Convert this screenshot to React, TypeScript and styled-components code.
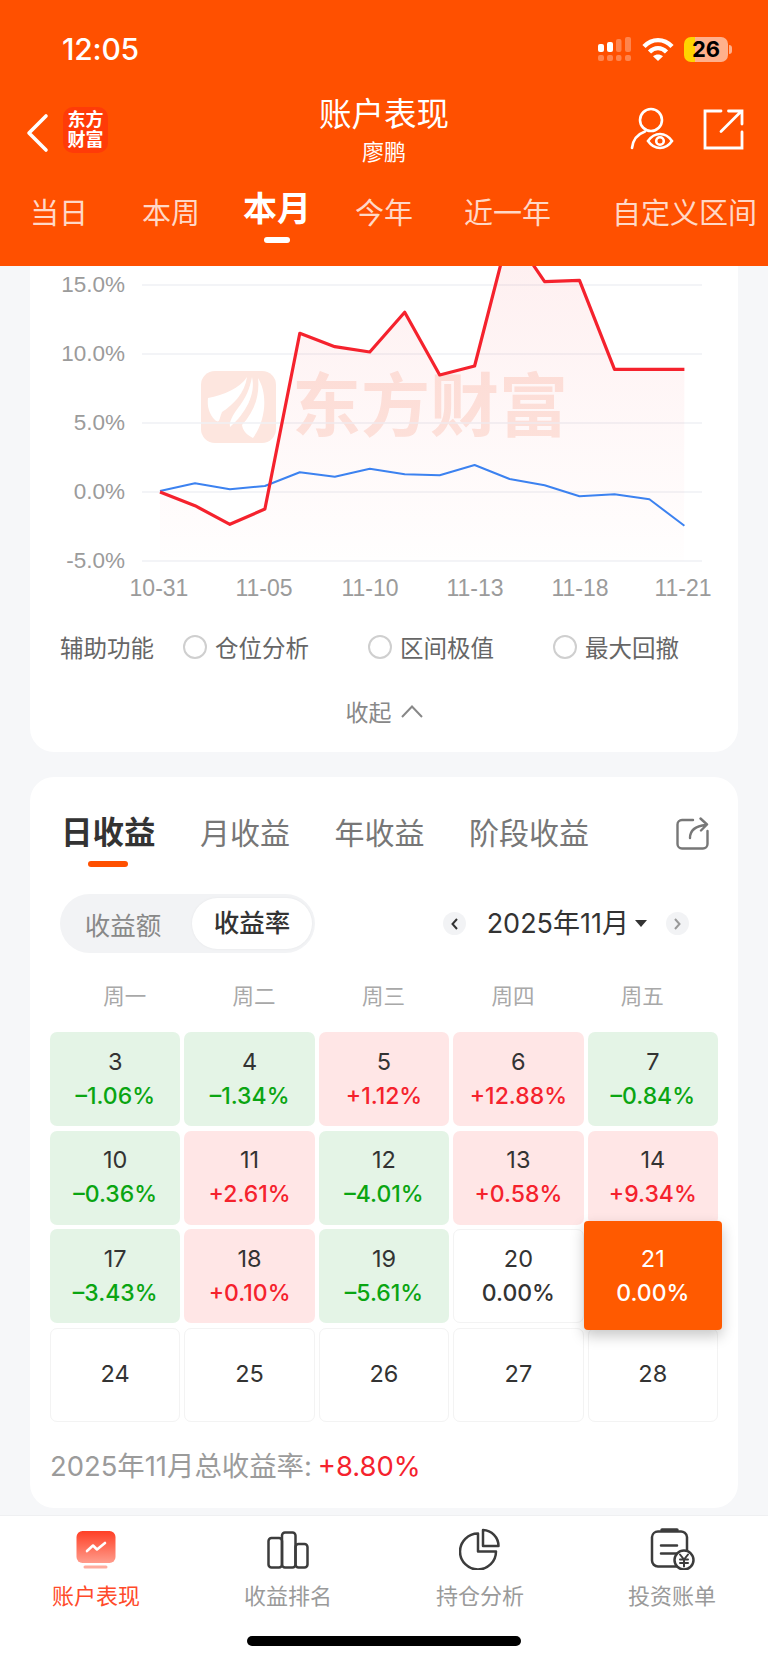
import React from "react";
import styled, { createGlobalStyle } from "styled-components";

const ORANGE = "#ff5000";
const RED = "#f5222d";
const GREEN = "#0aa512";

const Global = createGlobalStyle`
  html, body { margin: 0; padding: 0; background: #f6f7f9; }
  * { box-sizing: border-box; }
  body { font-family: Inter, "Noto Sans CJK SC", sans-serif; }
`;

const Page = styled.div`
  width: 768px;
  height: 1663px;
  display: flex;
  flex-direction: column;
  overflow: hidden;
  background: #f6f7f9;
`;

/* ---------- header ---------- */
const Header = styled.header`
  height: 266px;
  flex: none;
  background: ${ORANGE};
  color: #fff;
  display: flex;
  flex-direction: column;
`;
const StatusBar = styled.div`
  height: 98px;
  padding: 0 36px 0 62px;
  display: flex;
  align-items: center;
  justify-content: space-between;
`;
const Time = styled.div`
  font-size: 30px;
  font-weight: 500;
  letter-spacing: -0.2px;
  line-height: 1;
`;
const StatusIcons = styled.div`
  display: flex;
  align-items: center;
  gap: 10px;
`;
const Battery = styled.div`
  width: 44px;
  height: 25px;
  border-radius: 7px;
  background: linear-gradient(90deg, #ffd400 0 11px, rgba(255, 255, 255, 0.55) 11px);
  color: #000;
  font-size: 22px;
  font-weight: 700;
  line-height: 25px;
  text-align: center;
`;
const BatteryWrap = styled.div`
  display: flex;
  align-items: center;
  gap: 1px;
`;
const BatteryNub = styled.div`
  width: 3px;
  height: 9px;
  border-radius: 0 3px 3px 0;
  background: rgba(255, 255, 255, 0.55);
`;
const NavRow = styled.div`
  height: 91px;
  position: relative;
  display: flex;
  align-items: flex-start;
  padding: 9px 24px 0 26px;
`;
const LogoBadge = styled.div`
  width: 45px;
  height: 46px;
  margin: 0 0 0 13px;
  border-radius: 10px;
  background: #ff3b08;
  font-size: 18px;
  line-height: 20px;
  font-weight: 700;
  text-align: center;
  padding-top: 3px;
`;
const TitleBlock = styled.div`
  position: absolute;
  left: 0;
  right: 0;
  top: -3px;
  text-align: center;
  pointer-events: none;
`;
const Title = styled.div`
  font-size: 32.5px;
  line-height: 40px;
  font-weight: 400;
`;
const SubTitle = styled.div`
  font-size: 22px;
  line-height: 30px;
  margin-top: 2px;
`;
const NavRight = styled.div`
  margin-left: auto;
  display: flex;
  align-items: flex-start;
  gap: 28px;
`;
const Periods = styled.div`
  display: flex;
  align-items: flex-start;
  padding-left: 30px;
  white-space: nowrap;
`;
const Period = styled.div<{ $gap: number; $active?: boolean }>`
  margin-left: ${(p) => p.$gap}px;
  display: flex;
  flex-direction: column;
  align-items: center;
  font-size: ${(p) => (p.$active ? 34 : 29)}px;
  font-weight: ${(p) => (p.$active ? 700 : 400)};
  line-height: 40px;
  padding-top: ${(p) => (p.$active ? 0 : 5)}px;
  color: ${(p) => (p.$active ? "#fff" : "rgba(255,255,255,.78)")};
`;
const PeriodMark = styled.div`
  width: 26px;
  height: 6px;
  margin-top: 8px;
  border-radius: 3px;
  background: #fff;
`;

/* ---------- content ---------- */
const Content = styled.main`
  flex: 1;
  overflow: hidden;
  padding: 0 30px;
`;
const ChartCard = styled.section`
  height: 486px;
  background: #fff;
  border-radius: 0 0 24px 24px;
`;
const ChartSvg = styled.svg`
  display: block;
  margin-left: -1px;
`;
const AxisText = styled.text<{ $size: number }>`
  font-size: ${(p) => p.$size}px;
  fill: #9b9b9b;
  font-family: "Liberation Sans", sans-serif;
`;
const Watermark = styled.text`
  font-size: 69px;
  font-weight: 700;
  fill: #fde6df;
  font-family: "Noto Sans CJK SC", sans-serif;
`;
const FeatureRow = styled.div`
  margin-top: 22px;
  height: 40px;
  padding-left: 30px;
  display: flex;
  align-items: center;
`;
const FeatureLabel = styled.div`
  width: 123px;
  font-size: 23.5px;
  color: #666;
`;
const FeatureOption = styled.div`
  width: 185px;
  display: flex;
  align-items: center;
  gap: 8px;
  font-size: 23.5px;
  color: #666;
`;
const Radio = styled.span`
  width: 24px;
  height: 24px;
  border-radius: 50%;
  border: 2px solid #cfcfcf;
`;
const Collapse = styled.div`
  margin-top: 24px;
  height: 40px;
  display: flex;
  justify-content: center;
  align-items: center;
  gap: 9px;
  font-size: 23px;
  color: #888;
`;

const ReturnCard = styled.section`
  margin-top: 25px;
  height: 731px;
  background: #fff;
  border-radius: 24px;
  padding: 0 20px;
`;
const ReturnTabs = styled.div`
  height: 92px;
  padding: 36px 9px 0 11px;
  display: flex;
  align-items: flex-start;
  gap: 44.5px;
`;
const ReturnTab = styled.div<{ $active?: boolean }>`
  display: flex;
  flex-direction: column;
  align-items: center;
  font-size: ${(p) => (p.$active ? 31.5 : 30)}px;
  font-weight: ${(p) => (p.$active ? 700 : 400)};
  line-height: 40px;
  color: ${(p) => (p.$active ? "#333" : "#777")};
`;
const ReturnMark = styled.div`
  width: 40px;
  height: 6px;
  margin-top: 8px;
  border-radius: 3px;
  background: ${ORANGE};
`;
const ShareSvg = styled.svg`
  margin-left: auto;
  margin-top: 4px;
`;
const Controls = styled.div`
  margin-top: 25px;
  height: 59px;
  padding: 0 29px 0 10px;
  display: flex;
  align-items: center;
`;
const Segment = styled.div`
  width: 255px;
  height: 59px;
  border-radius: 30px;
  background: #f2f3f5;
  display: flex;
  align-items: center;
  padding: 0 3px 0 0;
  justify-content: space-between;
`;
const SegmentOff = styled.div`
  width: 126px;
  text-align: center;
  font-size: 25.5px;
  color: #888;
`;
const SegmentOn = styled.div`
  width: 120px;
  height: 51px;
  border-radius: 26px;
  background: #fff;
  font-size: 25.5px;
  font-weight: 500;
  line-height: 49px;
  text-align: center;
  color: #333;
  box-shadow: 0 0 3px rgba(0, 0, 0, 0.05);
`;
const MonthPicker = styled.div`
  margin-left: auto;
  display: flex;
  align-items: center;
`;
const MonthArrow = styled.div`
  width: 23px;
  height: 23px;
  border-radius: 50%;
  background: #f2f3f5;
  display: flex;
  align-items: center;
  justify-content: center;
`;
const MonthText = styled.div`
  margin: 0 0 0 21px;
  font-size: 27px;
  line-height: 36px;
  color: #333;
  white-space: nowrap;
`;
const Caret = styled.div`
  width: 0;
  height: 0;
  margin: 0 19px 0 6px;
  border-left: 6.5px solid transparent;
  border-right: 6.5px solid transparent;
  border-top: 7px solid #333;
`;
const Weekdays = styled.div`
  margin-top: 21px;
  height: 40px;
  padding: 0 11px 0 10px;
  display: grid;
  grid-template-columns: repeat(5, 1fr);
  align-items: center;
`;
const Weekday = styled.div`
  text-align: center;
  font-size: 21.5px;
  color: #a8a8a8;
`;
const Calendar = styled.div`
  margin-top: 18px;
  display: grid;
  grid-template-columns: repeat(5, 1fr);
  grid-auto-rows: 94px;
  column-gap: 4px;
  row-gap: 4.5px;
`;
type Tone = "up" | "down" | "flat" | "today";
const CELL_BG: Record<Tone, string> = { up: "#ffe6e6", down: "#e4f4e6", flat: "#fff", today: "transparent" };
const CELL_FG: Record<Tone, string> = { up: RED, down: GREEN, flat: "#333", today: "#fff" };
const Cell = styled.div<{ $tone: Tone }>`
  position: relative;
  border-radius: 7px;
  background: ${(p) => CELL_BG[p.$tone]};
  border: ${(p) => (p.$tone === "flat" ? "1px solid #f3f3f3" : "none")};
  display: flex;
  flex-direction: column;
  align-items: center;
  justify-content: center;
  z-index: ${(p) => (p.$tone === "today" ? 2 : 0)};
  padding-bottom: 1px;
  ${(p) =>
    p.$tone === "today"
      ? `&::before {
          content: "";
          position: absolute;
          inset: -8px -4px -7px -4px;
          border-radius: 4px;
          background: #ff5a00;
          box-shadow: 0 6px 14px rgba(0,0,0,.22);
        }`
      : ""}
`;
const CellDay = styled.div<{ $tone: Tone }>`
  position: relative;
  font-size: 23.5px;
  line-height: 34px;
  color: ${(p) => (p.$tone === "today" ? "#fff" : "#333")};
`;
const CellPct = styled.div<{ $tone: Tone }>`
  position: relative;
  font-size: 23px;
  font-weight: 500;
  line-height: 34px;
  color: ${(p) => CELL_FG[p.$tone]};
`;
const Total = styled.div`
  margin-top: 24px;
  height: 40px;
  line-height: 40px;
  font-size: 27.4px;
  color: #9b9b9b;
  white-space: nowrap;
`;
const TotalValue = styled.span`
  margin-left: 6px;
  color: ${RED};
`;

/* ---------- tab bar ---------- */
const TabBar = styled.nav`
  height: 148px;
  flex: none;
  position: relative;
  background: #fff;
  border-top: 1px solid #eff0f2;
  display: grid;
  grid-template-columns: repeat(4, 192px);
  padding: 12px 0 0;
`;
const TabItem = styled.div<{ $active?: boolean }>`
  display: flex;
  flex-direction: column;
  align-items: center;
  font-size: 22px;
  line-height: 30px;
  color: ${(p) => (p.$active ? "#ff4a2a" : "#9a9a9a")};
`;
const TabIcon = styled.svg`
  display: block;
  margin-bottom: 12px;
`;
const HomeBar = styled.div`
  position: absolute;
  left: 247px;
  bottom: 17px;
  width: 274px;
  height: 10px;
  border-radius: 5px;
  background: #000;
`;

/* ---------- drawings ---------- */
const xs = Array.from({ length: 16 }, (_, i) => 160 + i * 34.96);
const redV = [696, 737, 793, 747, 220, 260, 276, 157, 345, 318, -90, 65, 61, 328, 328, 328];
const blueV = [693, 670, 688, 678, 637, 650, 626, 643, 646, 615, 657, 676, 709, 703, 718, 797];
const pts = (vals: number[]) => vals.map((v, i) => `${xs[i].toFixed(1)},${(260 + v / 3).toFixed(1)}`).join(" ");

const CHART_TOP = 266;
const grid = [
  { y: 285, t: "15.0%" },
  { y: 354, t: "10.0%" },
  { y: 423, t: "5.0%" },
  { y: 492, t: "0.0%" },
  { y: 561, t: "-5.0%" },
];
const xLabels = [
  { x: 159, t: "10-31" },
  { x: 264, t: "11-05" },
  { x: 370, t: "11-10" },
  { x: 475, t: "11-13" },
  { x: 580, t: "11-18" },
  { x: 683, t: "11-21" },
];

const Chart = () => (
  <ChartSvg width={710} height={339} viewBox={`29 ${CHART_TOP} 710 339`}>
    <defs>
      <linearGradient id="area" x1="0" y1="0" x2="0" y2="1">
        <stop offset="0" stopColor="#f5222d" stopOpacity="0.075" />
        <stop offset="1" stopColor="#f5222d" stopOpacity="0.005" />
      </linearGradient>
    </defs>
    <rect x="201" y="371" width="75" height="72" rx="14" fill="#fde6df" />
    <path d="M208 398C224 395 240 388 247 377C245 393 233 405 222 412C219 419 220 424 215 420C209 414 207 406 208 398Z" fill="#fff" />
    <path d="M252 377C256 394 246 413 230 427C229 421 233 415 238 408C246 398 250 388 252 377Z" fill="#fff" />
    <path d="M258 378C268 394 266 420 253 438C247 435 243 431 242 425C254 412 260 396 258 378Z" fill="#fff" />
    <Watermark x="292" y="431">东方财富</Watermark>
    {grid.map((g) => (
      <g key={g.t}>
        <line x1="142" x2="702" y1={g.y} y2={g.y} stroke="#eff0f5" strokeWidth="1.5" />
        <AxisText $size={22.5} x="125" y={g.y + 7} textAnchor="end">{g.t}</AxisText>
      </g>
    ))}
    <polygon points={`${pts(redV)} 684,561 160,561`} fill="url(#area)" />
    <polyline points={pts(blueV)} fill="none" stroke="#3c82f0" strokeWidth="2" strokeLinejoin="round" />
    <polyline points={pts(redV)} fill="none" stroke="#f5222d" strokeWidth="3.2" strokeLinejoin="round" />
    {xLabels.map((l) => (
      <AxisText $size={23} key={l.t} x={l.x} y={596} textAnchor="middle">{l.t}</AxisText>
    ))}
  </ChartSvg>
);

const Signal = () => (
  <svg width="34" height="25" viewBox="0 0 34 25">
    <g fill="#fff">
      <rect x="0" y="7" width="6" height="8" rx="2" />
      <rect x="9" y="5" width="6" height="10" rx="2" />
    </g>
    <g fill="#fff" fillOpacity="0.3">
      <rect x="18" y="2" width="5.5" height="13" rx="2" />
      <rect x="27" y="0" width="6" height="15" rx="2" />
      <rect x="0" y="18" width="6" height="6" rx="2" />
      <rect x="9" y="18" width="6" height="6" rx="2" />
      <rect x="18" y="18" width="5.5" height="6" rx="2" />
      <rect x="27" y="18" width="6" height="6" rx="2" />
    </g>
  </svg>
);
const Wifi = () => (
  <svg width="32" height="24" viewBox="0 0 32 24" fill="none" stroke="#fff" strokeWidth="4.4">
    <path d="M2 9.5C10 1 22 1 30 9.5" />
    <path d="M7.5 15C12.5 9.8 19.5 9.8 24.5 15" />
    <path d="M11 19.2C14 17 18 17 21 19.2L16 24Z" fill="#fff" stroke="none" />
  </svg>
);
const Back = () => (
  <svg width="24" height="40" viewBox="0 0 24 40" fill="none" stroke="#fff" strokeWidth="3.6" strokeLinecap="round" strokeLinejoin="round" style={{ marginTop: 6 }}>
    <path d="M20 3L3 20L20 37" />
  </svg>
);
const PersonEye = () => (
  <svg width="46" height="46" viewBox="0 0 46 46" fill="none" stroke="#fff" strokeWidth="2.6" strokeLinecap="round" style={{ marginTop: -2 }}>
    <circle cx="22" cy="15" r="11" />
    <path d="M3 43C4 34 9 29 16 26.5" />
    <path d="M19 36C22.5 31 27 29 31 29C35 29 39.5 31 43 36C39.5 41 35 43 31 43C27 43 22.5 41 19 36Z" />
    <circle cx="31" cy="36" r="3.8" />
  </svg>
);
const ExportIcon = () => (
  <svg width="41" height="41" viewBox="0 0 41 41" fill="none" stroke="#fff" strokeWidth="2.8" strokeLinecap="round" style={{ marginTop: 2 }}>
    <path d="M18 2H2V39H39V23" />
    <path d="M18 22.5L38 2.5M25.5 2H39V15" />
  </svg>
);

const Active = () => (
  <TabIcon width="40" height="38" viewBox="0 0 40 38" style={{ marginTop: 3 }}>
    <defs>
      <linearGradient id="tabRed" x1="0" y1="0" x2="0" y2="1">
        <stop offset="0" stopColor="#ff3f25" />
        <stop offset="1" stopColor="#ff9c8c" />
      </linearGradient>
    </defs>
    <rect x="0.5" y="0" width="39" height="32" rx="6" fill="url(#tabRed)" />
    <rect x="7.5" y="34.5" width="24" height="3" rx="1.5" fill="#ffab9d" />
    <path d="M11 20L17 14.5L21 18.5L29 12" fill="none" stroke="#fff" strokeWidth="2.6" strokeLinecap="round" strokeLinejoin="round" />
  </TabIcon>
);
const Bars = () => (
  <TabIcon width="42" height="38" viewBox="0 0 42 38" fill="none" stroke="#3c3c3c" strokeWidth="2.5" style={{ marginTop: 3 }}>
    <rect x="1.5" y="7" width="13.5" height="29.5" rx="3" />
    <rect x="15" y="1.5" width="13.5" height="35" rx="3" />
    <rect x="28.5" y="13" width="12" height="23.5" rx="3" />
  </TabIcon>
);
const Pie = () => (
  <TabIcon width="42" height="42" viewBox="0 0 42 42" fill="none" stroke="#3c3c3c" strokeWidth="2.5" strokeLinejoin="round" style={{ marginBottom: 11 }}>
    <path d="M19 5.5A18 18 0 1 0 37 23.5H19Z" />
    <path d="M24 2A16 16 0 0 1 39.5 18H24Z" />
  </TabIcon>
);
const Bill = () => (
  <TabIcon width="46" height="42" viewBox="0 0 46 42" fill="none" stroke="#3c3c3c" strokeWidth="2.5" strokeLinecap="round" style={{ marginBottom: 11 }}>
    <path d="M31 38.5H9A6 6 0 0 1 3 32.5V9A6 6 0 0 1 9 3.5H31A6 6 0 0 1 38 9V22" />
    <path d="M13 2H28" strokeWidth="3.5" />
    <path d="M12 17.5H28M12 25.5H33" />
    <circle cx="35" cy="32" r="9.5" fill="#fff" />
    <path d="M31 26.5L35 31.5L39 26.5M31 31.5H39M31 35H39M35 31.5V38.5" strokeWidth="2" />
  </TabIcon>
);

type Day = { d: number; p?: string; t: Tone };
const days: Day[] = [
  { d: 3, p: "–1.06%", t: "down" },
  { d: 4, p: "–1.34%", t: "down" },
  { d: 5, p: "+1.12%", t: "up" },
  { d: 6, p: "+12.88%", t: "up" },
  { d: 7, p: "–0.84%", t: "down" },
  { d: 10, p: "–0.36%", t: "down" },
  { d: 11, p: "+2.61%", t: "up" },
  { d: 12, p: "–4.01%", t: "down" },
  { d: 13, p: "+0.58%", t: "up" },
  { d: 14, p: "+9.34%", t: "up" },
  { d: 17, p: "–3.43%", t: "down" },
  { d: 18, p: "+0.10%", t: "up" },
  { d: 19, p: "–5.61%", t: "down" },
  { d: 20, p: "0.00%", t: "flat" },
  { d: 21, p: "0.00%", t: "today" },
  { d: 24, t: "flat" },
  { d: 25, t: "flat" },
  { d: 26, t: "flat" },
  { d: 27, t: "flat" },
  { d: 28, t: "flat" },
];

export default function App() {
  return (
    <Page>
      <Global />
      <Header>
        <StatusBar>
          <Time>12:05</Time>
          <StatusIcons>
            <Signal />
            <Wifi />
            <BatteryWrap>
              <Battery>26</Battery>
              <BatteryNub />
            </BatteryWrap>
          </StatusIcons>
        </StatusBar>
        <NavRow>
          <Back />
          <LogoBadge>
            东方
            <br />
            财富
          </LogoBadge>
          <TitleBlock>
            <Title>账户表现</Title>
            <SubTitle>廖鹏</SubTitle>
          </TitleBlock>
          <NavRight>
            <PersonEye />
            <ExportIcon />
          </NavRight>
        </NavRow>
        <Periods>
          <Period $gap={0}>当日</Period>
          <Period $gap={54}>本周</Period>
          <Period $gap={43} $active>
            本月
            <PeriodMark />
          </Period>
          <Period $gap={44}>今年</Period>
          <Period $gap={51}>近一年</Period>
          <Period $gap={61}>自定义区间</Period>
        </Periods>
      </Header>

      <Content>
        <ChartCard>
          <Chart />
          <FeatureRow>
            <FeatureLabel>辅助功能</FeatureLabel>
            <FeatureOption>
              <Radio />
              仓位分析
            </FeatureOption>
            <FeatureOption>
              <Radio />
              区间极值
            </FeatureOption>
            <FeatureOption>
              <Radio />
              最大回撤
            </FeatureOption>
          </FeatureRow>
          <Collapse>
            收起
            <svg width="22" height="13" viewBox="0 0 22 13" fill="none" stroke="#888" strokeWidth="2">
              <path d="M1 12L11 1.5L21 12" />
            </svg>
          </Collapse>
        </ChartCard>

        <ReturnCard>
          <ReturnTabs>
            <ReturnTab $active>
              日收益
              <ReturnMark />
            </ReturnTab>
            <ReturnTab>月收益</ReturnTab>
            <ReturnTab>年收益</ReturnTab>
            <ReturnTab>阶段收益</ReturnTab>
            <ShareSvg width="33" height="33" viewBox="0 0 33 33" fill="none" stroke="#777" strokeWidth="2.4" strokeLinecap="round" strokeLinejoin="round">
              <path d="M17 3H6A4.5 4.5 0 0 0 1.5 7.5V27A4.5 4.5 0 0 0 6 31.5H27A4.5 4.5 0 0 0 31.5 27V14" />
              <path d="M14 21C14 14 19 9 30 8M24.5 1.5L31 7.5L25 13.5" />
            </ShareSvg>
          </ReturnTabs>
          <Controls>
            <Segment>
              <SegmentOff>收益额</SegmentOff>
              <SegmentOn>收益率</SegmentOn>
            </Segment>
            <MonthPicker>
              <MonthArrow>
                <svg width="9" height="14" viewBox="0 0 9 14" fill="none" stroke="#333" strokeWidth="2">
                  <path d="M7 2L2.5 7L7 12" />
                </svg>
              </MonthArrow>
              <MonthText>2025年11月</MonthText>
              <Caret />
              <MonthArrow>
                <svg width="9" height="14" viewBox="0 0 9 14" fill="none" stroke="#999" strokeWidth="2">
                  <path d="M2 2L6.5 7L2 12" />
                </svg>
              </MonthArrow>
            </MonthPicker>
          </Controls>
          <Weekdays>
            {["周一", "周二", "周三", "周四", "周五"].map((w) => (
              <Weekday key={w}>{w}</Weekday>
            ))}
          </Weekdays>
          <Calendar>
            {days.map((c) => (
              <Cell key={c.d} $tone={c.t}>
                <CellDay $tone={c.t}>{c.d}</CellDay>
                {c.p && <CellPct $tone={c.t}>{c.p}</CellPct>}
              </Cell>
            ))}
          </Calendar>
          <Total>
            2025年11月总收益率:
            <TotalValue>+8.80%</TotalValue>
          </Total>
        </ReturnCard>
      </Content>

      <TabBar>
        <TabItem $active>
          <Active />
          账户表现
        </TabItem>
        <TabItem>
          <Bars />
          收益排名
        </TabItem>
        <TabItem>
          <Pie />
          持仓分析
        </TabItem>
        <TabItem>
          <Bill />
          投资账单
        </TabItem>
        <HomeBar />
      </TabBar>
    </Page>
  );
}
